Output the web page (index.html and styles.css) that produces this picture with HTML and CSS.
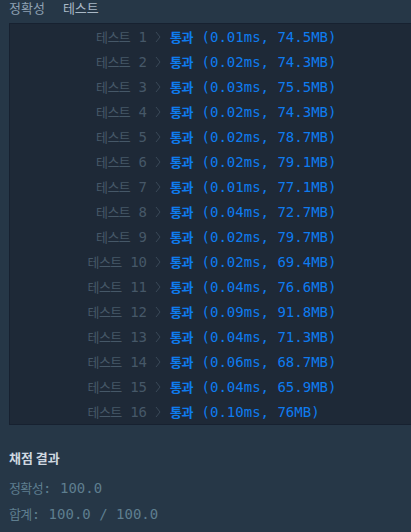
FILE: index.html
```html
<!DOCTYPE html>
<html>
<head>
  <meta charset="utf-8" />
  <title>채점 결과</title>
  <meta name="viewport" content="width=device-width, initial-scale=1">
  <link rel="stylesheet" href="styles.css">
</head>
<body>
  <div class="tabs">
    <span class="tab">정확성</span>
    <span class="tab active">테스트</span>
  </div>
  <div class="console">
    <div class="row"><span class="label"><span class="ko">테스트</span> 1</span><svg class="chev" viewBox="0 0 6 12"><polyline points="1,1 5,6 1,11"/></svg><span class="result"><span class="ko">통과</span> (0.01ms, 74.5MB)</span></div>
    <div class="row"><span class="label"><span class="ko">테스트</span> 2</span><svg class="chev" viewBox="0 0 6 12"><polyline points="1,1 5,6 1,11"/></svg><span class="result"><span class="ko">통과</span> (0.02ms, 74.3MB)</span></div>
    <div class="row"><span class="label"><span class="ko">테스트</span> 3</span><svg class="chev" viewBox="0 0 6 12"><polyline points="1,1 5,6 1,11"/></svg><span class="result"><span class="ko">통과</span> (0.03ms, 75.5MB)</span></div>
    <div class="row"><span class="label"><span class="ko">테스트</span> 4</span><svg class="chev" viewBox="0 0 6 12"><polyline points="1,1 5,6 1,11"/></svg><span class="result"><span class="ko">통과</span> (0.02ms, 74.3MB)</span></div>
    <div class="row"><span class="label"><span class="ko">테스트</span> 5</span><svg class="chev" viewBox="0 0 6 12"><polyline points="1,1 5,6 1,11"/></svg><span class="result"><span class="ko">통과</span> (0.02ms, 78.7MB)</span></div>
    <div class="row"><span class="label"><span class="ko">테스트</span> 6</span><svg class="chev" viewBox="0 0 6 12"><polyline points="1,1 5,6 1,11"/></svg><span class="result"><span class="ko">통과</span> (0.02ms, 79.1MB)</span></div>
    <div class="row"><span class="label"><span class="ko">테스트</span> 7</span><svg class="chev" viewBox="0 0 6 12"><polyline points="1,1 5,6 1,11"/></svg><span class="result"><span class="ko">통과</span> (0.01ms, 77.1MB)</span></div>
    <div class="row"><span class="label"><span class="ko">테스트</span> 8</span><svg class="chev" viewBox="0 0 6 12"><polyline points="1,1 5,6 1,11"/></svg><span class="result"><span class="ko">통과</span> (0.04ms, 72.7MB)</span></div>
    <div class="row"><span class="label"><span class="ko">테스트</span> 9</span><svg class="chev" viewBox="0 0 6 12"><polyline points="1,1 5,6 1,11"/></svg><span class="result"><span class="ko">통과</span> (0.02ms, 79.7MB)</span></div>
    <div class="row"><span class="label"><span class="ko">테스트</span> 10</span><svg class="chev" viewBox="0 0 6 12"><polyline points="1,1 5,6 1,11"/></svg><span class="result"><span class="ko">통과</span> (0.02ms, 69.4MB)</span></div>
    <div class="row"><span class="label"><span class="ko">테스트</span> 11</span><svg class="chev" viewBox="0 0 6 12"><polyline points="1,1 5,6 1,11"/></svg><span class="result"><span class="ko">통과</span> (0.04ms, 76.6MB)</span></div>
    <div class="row"><span class="label"><span class="ko">테스트</span> 12</span><svg class="chev" viewBox="0 0 6 12"><polyline points="1,1 5,6 1,11"/></svg><span class="result"><span class="ko">통과</span> (0.09ms, 91.8MB)</span></div>
    <div class="row"><span class="label"><span class="ko">테스트</span> 13</span><svg class="chev" viewBox="0 0 6 12"><polyline points="1,1 5,6 1,11"/></svg><span class="result"><span class="ko">통과</span> (0.04ms, 71.3MB)</span></div>
    <div class="row"><span class="label"><span class="ko">테스트</span> 14</span><svg class="chev" viewBox="0 0 6 12"><polyline points="1,1 5,6 1,11"/></svg><span class="result"><span class="ko">통과</span> (0.06ms, 68.7MB)</span></div>
    <div class="row"><span class="label"><span class="ko">테스트</span> 15</span><svg class="chev" viewBox="0 0 6 12"><polyline points="1,1 5,6 1,11"/></svg><span class="result"><span class="ko">통과</span> (0.04ms, 65.9MB)</span></div>
    <div class="row"><span class="label"><span class="ko">테스트</span> 16</span><svg class="chev" viewBox="0 0 6 12"><polyline points="1,1 5,6 1,11"/></svg><span class="result"><span class="ko">통과</span> (0.10ms, 76MB)</span></div>
  </div>
  <div class="summary">
    <h3>채점 결과</h3>
    <p><span class="ko">정확성</span>: 100.0</p>
    <p><span class="ko">합계</span>: 100.0 / 100.0</p>
  </div>
</body>
</html>
```

FILE: styles.css
```css
* { margin: 0; padding: 0; box-sizing: border-box; }
body { width: 411px; height: 532px; overflow: hidden; background: #263747; font-family: 'DejaVu Sans Mono', 'Noto Sans CJK KR', monospace; }
.ko { font-family: 'Noto Sans CJK KR', sans-serif; font-size: 13px; letter-spacing: -0.6px; }
.tabs { display: flex; gap: 18px; height: 23px; padding: 0 9px; font-family: 'Noto Sans', 'Noto Sans CJK KR', sans-serif; font-size: 13px; line-height: 17px; color: #8fa1b3; }
.tab.active { color: #a9b8c6; }
.console { width: 420px; margin-left: 9px; border: 1px solid #172130; border-right: none; background: #1e2937; }
.row { display: flex; align-items: center; height: 25px; font-size: 14px; }
.label { width: 137px; text-align: right; color: #465868; }
.chev { width: 6px; height: 12px; margin: 0 9px 0 8px; fill: none; stroke: #3a4958; stroke-width: 1; }
.result { color: #0e7cf0; }
.result .ko { font-weight: bold; letter-spacing: -0.4px; }
.summary { padding: 23px 9px 0; font-size: 14px; }
.summary h3 { font-family: 'Noto Sans CJK KR', sans-serif; font-size: 13px; font-weight: bold; color: #cfd8e0; line-height: 20px; margin-bottom: 7px; }
.summary p { color: #5e7e8f; line-height: 25px; }
```
